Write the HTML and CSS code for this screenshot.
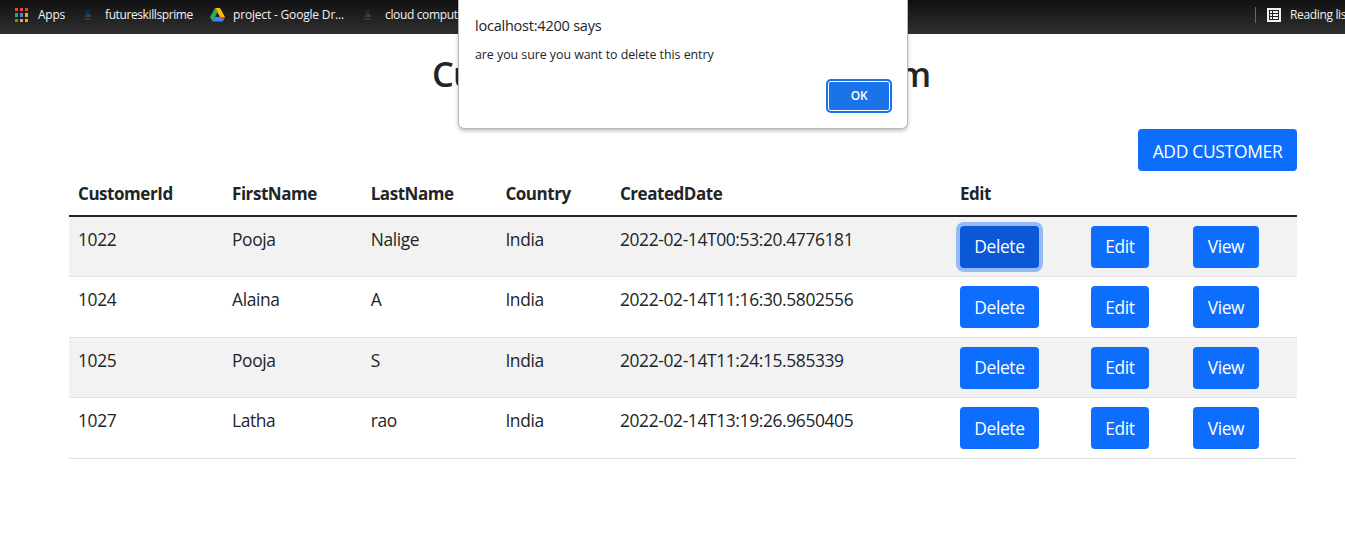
FILE: index.html
```html
<!DOCTYPE html>
<html lang="en">
<head>
<meta charset="utf-8">
<title>Customers</title>
<link rel="stylesheet" href="styles.css">
</head>
<body>
<header class="bookmarks">
  <div class="bookmark apps">
    <svg class="icon" width="13" height="14" viewBox="0 0 13 14" shape-rendering="crispEdges"><path fill="#ea4335" d="M0 0h3v3H0zM5 0h3v3H5zM10 0h3v3h-3z"/><path fill="#34a853" d="M0 5h3v4H0zM0 11h3v3H0z"/><path fill="#4285f4" d="M5 5h3v4H5z"/><path fill="#fbab05" d="M10 5h3v4h-3zM5 11h3v3H5zM10 11h3v3h-3z"/></svg>
    <span class="label">Apps</span>
  </div>
  <div class="bookmark future">
    <svg class="icon" width="8" height="12" viewBox="0 0 8 12"><path fill="#172b40" d="M1 0l2 2 3-1v3H1z"/><path fill="#174b68" d="M2 5h4l1 3H1z"/><path fill="#552b27" d="M0 9h7v2H0z"/><path fill="#18324e" d="M2 4h3v1H2z"/></svg>
    <span class="label">futureskillsprime</span>
  </div>
  <div class="bookmark drive">
    <svg class="icon" width="15" height="14" viewBox="0 0 15 14"><path fill="#fbbc04" d="M5 0h5l5 9h-5z"/><path fill="#34a853" d="M5 0l2.5 4.5L2.5 13.3 0 9z"/><path fill="#4285f4" d="M4.9 9H15l-2.3 4.5H2.3z"/><path fill="#ea4335" d="M10.4 9H15l-2 3.8z"/></svg>
    <span class="label">project - Google Dr...</span>
  </div>
  <div class="bookmark cloud">
    <svg class="icon" width="8" height="12" viewBox="0 0 8 12"><path fill="#172b40" d="M1 0l2 2 3-1v3H1z"/><path fill="#174b68" d="M2 5h4l1 3H1z"/><path fill="#552b27" d="M0 9h7v2H0z"/><path fill="#18324e" d="M2 4h3v1H2z"/></svg>
    <span class="label">cloud computing</span>
  </div>
  <div class="reading">
    <svg class="icon" width="14" height="14" viewBox="0 0 14 14" shape-rendering="crispEdges"><path fill="#f1f1f1" fill-rule="evenodd" d="M0 0h14v14H0zM2 2v10h10V2z"/><path fill="#f1f1f1" d="M3 3h2v2H3zM6 3h5v2H6zM3 6h2v2H3zM6 6h5v2H6zM3 9h2v2H3zM6 9h5v2H6z"/></svg>
    <span class="label">Reading list</span>
  </div>
</header>
<main class="page">
  <h2 class="title">Customer Management System</h2>
  <div class="toolbar"><button class="btn add">ADD CUSTOMER</button></div>
  <div class="table">
    <div class="row head"><span>CustomerId</span><span>FirstName</span><span>LastName</span><span>Country</span><span>CreatedDate</span><span>Edit</span></div>
    <div class="row striped"><span>1022</span><span>Pooja</span><span>Nalige</span><span>India</span><span>2022-02-14T00:53:20.4776181</span><span><button class="btn delete active">Delete</button></span><span><button class="btn edit">Edit</button></span><span><button class="btn view">View</button></span></div>
    <div class="row"><span>1024</span><span>Alaina</span><span>A</span><span>India</span><span>2022-02-14T11:16:30.5802556</span><span><button class="btn delete">Delete</button></span><span><button class="btn edit">Edit</button></span><span><button class="btn view">View</button></span></div>
    <div class="row striped"><span>1025</span><span>Pooja</span><span>S</span><span>India</span><span>2022-02-14T11:24:15.585339</span><span><button class="btn delete">Delete</button></span><span><button class="btn edit">Edit</button></span><span><button class="btn view">View</button></span></div>
    <div class="row"><span>1027</span><span>Latha</span><span>rao</span><span>India</span><span>2022-02-14T13:19:26.9650405</span><span><button class="btn delete">Delete</button></span><span><button class="btn edit">Edit</button></span><span><button class="btn view">View</button></span></div>
  </div>
</main>
<div class="dialog" role="alertdialog">
  <div class="origin">localhost:4200 says</div>
  <div class="message">are you sure you want to delete this entry</div>
  <button class="ok">OK</button>
</div>
</body>
</html>
```
FILE: styles.css
```css
* { box-sizing: border-box; }
body {
  margin: 0;
  height: 543px;
  overflow: hidden;
  position: relative;
  background: #fff;
  color: #212529;
  font: 17.4px/26px "Open Sans", "Noto Sans", sans-serif;
}
button { font: inherit; letter-spacing: inherit; white-space: nowrap; }
.icon { display: block; flex: none; }

.bookmarks {
  display: flex;
  height: 34px;
  padding: 0 0 4px 15px;
  overflow: hidden;
  background: linear-gradient(#111, #303030);
  color: #f1f1f1;
  font-size: 12px;
  line-height: 16px;
  white-space: nowrap;
}
.bookmark, .reading { display: flex; align-items: center; flex: none; }
.apps { width: 69px; gap: 10px; letter-spacing: -0.25px; }
.future { width: 126px; gap: 13px; letter-spacing: -0.4px; }
.drive { width: 154px; gap: 8px; letter-spacing: -0.18px; }
.cloud { gap: 13px; letter-spacing: -0.35px; }
.reading {
  width: 90px;
  height: 16px;
  margin: 7px 0 0 auto;
  padding-left: 11px;
  border-left: 1px solid #666;
  gap: 9px;
  letter-spacing: -0.35px;
}

.page { padding: 16px 48px 0 69px; }
.title {
  margin: 0 0 0 363px;
  font-size: 34.5px;
  line-height: 48px;
  font-weight: 600;
  letter-spacing: -0.94px;
  white-space: nowrap;
}
.toolbar { display: flex; justify-content: flex-end; padding-top: 31px; }
.btn {
  height: 42px;
  padding: 0;
  border: 0;
  border-radius: 4px;
  background: #0d6efd;
  color: #fff;
  display: block;
}
.add { width: 159px; padding-top: 1px; letter-spacing: -0.28px; }
.delete { width: 79px; }
.edit { width: 58px; }
.view { width: 66px; }
.active { background: #0a58d6; box-shadow: 0 0 0 4px #94bbf8; }

.row {
  display: grid;
  grid-template-columns: 154px 138.7px 134.7px 114.6px 340px 131px 102px 1fr;
  height: 60.5px;
  padding: 9px 0 0 9px;
  border-bottom: 1px solid #dee2e6;
  line-height: 27px;
  letter-spacing: -0.37px;
}
.row.striped { background: #f2f2f2; }
.row.head {
  height: 45.8px;
  padding-top: 10px;
  border-bottom: 2px solid #212529;
  font-size: 17px;
  line-height: 26px;
  font-weight: 700;
  letter-spacing: -0.45px;
}

.dialog {
  position: absolute;
  left: 459px;
  top: -10px;
  width: 448px;
  height: 138px;
  padding: 24px 15px 24px 16px;
  display: flex;
  flex-direction: column;
  background: #fff;
  border-radius: 5px;
  box-shadow: 0 0 0 1px #b8babc, 0 2px 5px rgba(0, 0, 0, 0.35);
}
.origin { font-size: 14.5px; line-height: 24px; letter-spacing: -0.22px; }
.message { margin-top: 8px; font-size: 12.4px; line-height: 18px; letter-spacing: -0.04px; }
.ok {
  width: 62px;
  height: 30px;
  margin: 17px 2px 0 auto;
  padding: 0;
  border: 1px solid #fff;
  border-radius: 3px;
  flex: none;
  background: #1a73e8;
  box-shadow: 0 0 0 2px #1a73e8;
  color: #fff;
  font-size: 12px;
  font-weight: 600;
  letter-spacing: -0.3px;
}
```
